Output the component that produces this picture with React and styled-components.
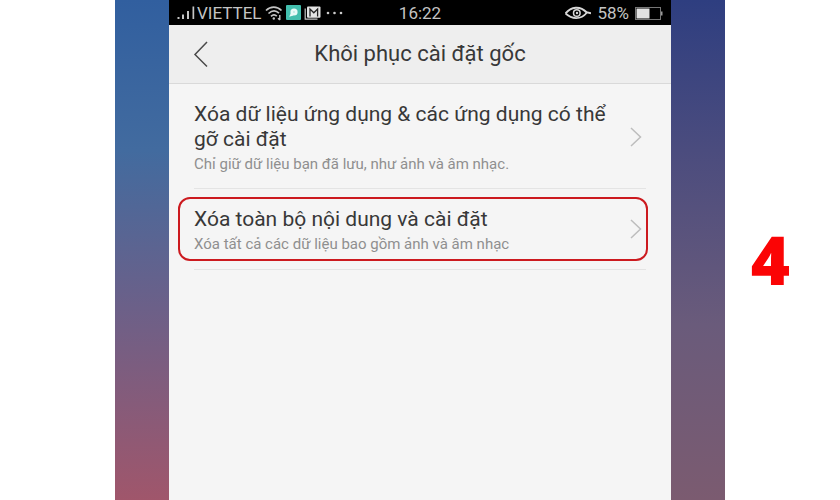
import React from "react";
import styled, { createGlobalStyle } from "styled-components";

const GlobalStyle = createGlobalStyle`
  * {
    box-sizing: border-box;
  }

  body {
    margin: 0;
    background: #ffffff;
    font-family: Roboto, "Noto Sans", sans-serif;
  }
`;

const Page = styled.div`
  display: grid;
  grid-template-columns: 115fr 610fr 115fr;
  min-height: 100vh;
`;

const Backdrop = styled.div`
  grid-column: 2;
  display: grid;
  grid-template-columns: 54px minmax(0, 1fr) 54px;
`;

const Edge = styled.div`
  background: linear-gradient(180deg, ${({ $colors }) => $colors.join(", ")});
`;

const Screen = styled.main`
  background: #f5f5f5;
`;

const StatusBar = styled.div`
  display: grid;
  grid-template-columns: 1fr auto 1fr;
  align-items: center;
  height: 25px;
  padding: 0 8px;
  background: #000000;
  color: #c4c4c4;
  font-size: 17px;
  line-height: 24px;
`;

const StatusGroup = styled.div`
  display: flex;
  align-items: center;
  justify-content: ${({ $end }) => ($end ? "flex-end" : "flex-start")};
  gap: ${({ $end }) => ($end ? 6 : 3)}px;
`;

const Carrier = styled.span`
  display: flex;
  align-items: center;
  gap: 2px;
`;

const Header = styled.header`
  display: grid;
  grid-template-columns: 48px 1fr 48px;
  align-items: center;
  height: 59px;
  padding: 0 16px;
  background: #eeeeee;
  border-bottom: 1px solid #d9d9d9;
`;

const BackButton = styled.button`
  display: flex;
  padding: 8px;
  border: none;
  background: none;
  color: #4a4a4a;
  cursor: pointer;
`;

const Title = styled.h1`
  margin: 0;
  color: #383838;
  font-size: 22px;
  font-weight: 400;
  line-height: 28px;
  text-align: center;
`;

const List = styled.ul`
  margin: 0;
  padding: 0;
  list-style: none;
`;

const Item = styled.li`
  padding: ${({ $marked }) => ($marked ? "8px 23px 8px 9px" : "8px 25px")};

  &::after {
    content: "";
    display: block;
    height: 1px;
    margin: ${({ $marked }) => ($marked ? "8px 2px 0 16px" : "8px 0 0")};
    background: #e4e4e4;
  }

  & + & {
    padding-top: 0;
  }
`;

const Option = styled.button`
  display: flex;
  align-items: center;
  justify-content: space-between;
  width: 100%;
  padding: ${({ $marked }) => ($marked ? "8px 4px 3px 14px" : "10px 4px 4px 0")};
  border: ${({ $marked }) => ($marked ? "2px solid #cc1a1f" : "none")};
  border-radius: ${({ $marked }) => ($marked ? 12 : 0)}px;
  background: none;
  font-family: inherit;
  text-align: left;
  cursor: pointer;
`;

const OptionText = styled.span`
  display: flex;
  flex-direction: column;
`;

const OptionTitle = styled.span`
  color: #383838;
  font-size: 21px;
  line-height: 25px;
`;

const OptionNote = styled.span`
  color: #8f8f8f;
  font-size: 15px;
  line-height: 24px;
`;

const Step = styled.aside`
  align-self: center;
  padding-top: 18px;
  padding-right: 24px;
  color: #fb0405;
  font-family: "Open Sans", "Noto Sans", sans-serif;
  font-size: 67px;
  font-weight: 800;
  line-height: 80px;
  text-align: center;
`;

const SignalIcon = () => (
  <svg width="18" height="16" viewBox="0 0 18 16" fill="#c4c4c4" aria-hidden="true">
    <rect x="0.5" y="12" width="2" height="2" />
    <rect x="5" y="9.5" width="2" height="4.5" />
    <rect x="10" y="6" width="2" height="8" />
    <rect x="15.5" y="1.5" width="1.7" height="12.5" />
  </svg>
);

const WifiIcon = () => (
  <svg width="18" height="16" viewBox="0 0 18 16" fill="none" stroke="#c4c4c4" strokeWidth="1.7" aria-hidden="true">
    <path d="M1 5.5C5.5 1 12 1 16.5 5.5" />
    <path d="M3.5 8.5C7 5.2 11 5.2 14 8.2" />
    <path d="M6 11.3C8 9.3 10 9.3 11.8 11.2" />
    <circle cx="8.8" cy="13.5" r="1.2" fill="#c4c4c4" stroke="none" />
    <path d="M14.8 10v5M13 13.2l1.8 1.8" strokeWidth="1.4" />
  </svg>
);

const ChatIcon = () => (
  <svg width="15" height="15" viewBox="0 0 15 15" aria-hidden="true">
    <rect width="15" height="15" rx="1" fill="#43bfae" />
    <circle cx="8" cy="7" r="3.6" fill="#e8faf7" />
    <path d="M4.8 8.2L3.2 11.8l4.3-1.4z" fill="#e8faf7" />
    <circle cx="8" cy="7" r="0.9" fill="#b5e8e1" />
  </svg>
);

const MailIcon = () => (
  <svg width="17" height="14" viewBox="0 0 17 14" fill="none" aria-hidden="true">
    <path d="M1.2 2.5v10.7h12.3" stroke="#c4c4c4" strokeWidth="1.2" />
    <rect x="3" y="0.5" width="13.5" height="11.2" rx="1" fill="#e4e4e4" />
    <path d="M6 10.5V3l3.8 3.8L13.6 3v7.5" stroke="#222222" strokeWidth="1.3" />
  </svg>
);

const MoreIcon = () => (
  <svg width="20" height="4" viewBox="0 0 20 4" fill="#cccccc" aria-hidden="true">
    <circle cx="4" cy="2" r="1.3" />
    <circle cx="10.5" cy="2" r="1.3" />
    <circle cx="17" cy="2" r="1.3" />
  </svg>
);

const EyeIcon = () => (
  <svg width="26" height="14" viewBox="1 0 26 14" fill="none" stroke="#d8d8d8" aria-hidden="true">
    <path d="M1.5 7.5C7 0.5 16 -0.5 22.5 6.2L27 7.2" strokeWidth="2" />
    <path d="M1.5 7.5c6 5.5 15 7 21.5-1" strokeWidth="1.7" />
    <circle cx="12.8" cy="7" r="3.3" strokeWidth="1.5" />
    <circle cx="13" cy="7" r="1.2" fill="#d8d8d8" stroke="none" />
  </svg>
);

const BatteryIcon = () => (
  <svg width="28" height="14" viewBox="0 0 28 14" aria-hidden="true">
    <rect x="0.5" y="1.5" width="25" height="12" fill="none" stroke="#777777" />
    <rect x="1.5" y="2.5" width="13" height="10" fill="#e2e2e2" />
    <rect x="26" y="5.5" width="1.5" height="4" fill="#999999" />
  </svg>
);

const BackIcon = () => (
  <svg width="16" height="28" viewBox="0 0 16 28" fill="none" stroke="currentColor" strokeWidth="1.5" aria-hidden="true">
    <path d="M14 2L2 14.5l12 12" />
  </svg>
);

const Chevron = styled.svg`
  flex-shrink: 0;
  margin-bottom: 5px;
`;

const ChevronIcon = () => (
  <Chevron width="12" height="20" viewBox="0 0 12 20" fill="none" stroke="#bdbdbd" strokeWidth="1.5" aria-hidden="true">
    <path d="M1 1l9.5 9L1 19" />
  </Chevron>
);

const options = [
  {
    title: "Xóa dữ liệu ứng dụng & các ứng dụng có thể gỡ cài đặt",
    note: "Chỉ giữ dữ liệu bạn đã lưu, như ảnh và âm nhạc.",
  },
  {
    title: "Xóa toàn bộ nội dung và cài đặt",
    note: "Xóa tất cả các dữ liệu bao gồm ảnh và âm nhạc",
    marked: true,
  },
];

const App = () => {
  return (
    <>
      <GlobalStyle />
      <Page>
        <Backdrop>
          <Edge $colors={["#315f9f", "#426b9f 30%", "#67618b 58%", "#a0566b"]} />
          <Screen>
            <StatusBar>
              <StatusGroup>
                <Carrier>
                  <SignalIcon />
                  <span>VIETTEL</span>
                </Carrier>
                <WifiIcon />
                <ChatIcon />
                <MailIcon />
                <MoreIcon />
              </StatusGroup>
              <span>16:22</span>
              <StatusGroup $end>
                <EyeIcon />
                <span>58%</span>
                <BatteryIcon />
              </StatusGroup>
            </StatusBar>
            <Header>
              <BackButton type="button" aria-label="Quay lại">
                <BackIcon />
              </BackButton>
              <Title>Khôi phục cài đặt gốc</Title>
            </Header>
            <List>
              {options.map(({ title, note, marked }) => (
                <Item key={title} $marked={marked}>
                  <Option type="button" $marked={marked}>
                    <OptionText>
                      <OptionTitle>{title}</OptionTitle>
                      <OptionNote>{note}</OptionNote>
                    </OptionText>
                    <ChevronIcon />
                  </Option>
                </Item>
              ))}
            </List>
          </Screen>
          <Edge $colors={["#2e3e80", "#4b4c7e 30%", "#6a5b7b 65%", "#7b5b70"]} />
        </Backdrop>
        <Step>4</Step>
      </Page>
    </>
  );
};

export default App;
